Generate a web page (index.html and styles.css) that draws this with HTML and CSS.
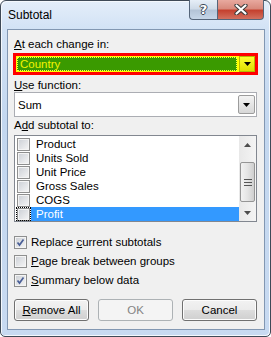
FILE: index.html
```html
<!DOCTYPE html>
<html lang="en">
  <head>
    <meta charset="UTF-8" />
    <title>Subtotal</title>
    <link rel="stylesheet" href="styles.css">
  </head>
  <body>
    <div class="window">
      <div class="titlebar">
        <span class="title">Subtotal</span>
        <div class="caption-buttons">
          <span class="cap-btn cap-help">?</span>
          <span class="cap-btn cap-close">
            <svg width="14" height="11" viewBox="0 0 14 11">
              <path d="M2.5 1.5 L11.5 9.5 M11.5 1.5 L2.5 9.5" stroke="#3a3a3a" stroke-width="4.2" stroke-linecap="round" />
              <path d="M2.5 1.5 L11.5 9.5 M11.5 1.5 L2.5 9.5" stroke="#fff" stroke-width="2.2" stroke-linecap="round" />
            </svg>
          </span>
        </div>
      </div>

      <div class="client">
        <div class="field-label label-first"><u>A</u>t each change in:</div>
        <div class="combo combo-hl">
          <span class="combo-text">Country</span>
          <span class="combo-btn">
            <svg width="7" height="4" viewBox="0 0 7 4"><path d="M0 0 H7 L3.5 4 Z" fill="#000" /></svg>
          </span>
        </div>

        <div class="field-label label-use"><u>U</u>se function:</div>
        <div class="combo combo-plain">
          <span class="combo-text">Sum</span>
          <span class="combo-btn">
            <svg width="7" height="4" viewBox="0 0 7 4"><path d="M0 0 H7 L3.5 4 Z" fill="#000" /></svg>
          </span>
        </div>

        <div class="field-label label-add">A<u>d</u>d subtotal to:</div>
        <div class="listbox">
          <ul class="list-items">
            <li class="list-item"><span class="item-focus"><span class="check"></span></span><span class="item-name">Product</span></li>
            <li class="list-item"><span class="item-focus"><span class="check"></span></span><span class="item-name">Units Sold</span></li>
            <li class="list-item"><span class="item-focus"><span class="check"></span></span><span class="item-name">Unit Price</span></li>
            <li class="list-item"><span class="item-focus"><span class="check"></span></span><span class="item-name">Gross Sales</span></li>
            <li class="list-item"><span class="item-focus"><span class="check"></span></span><span class="item-name">COGS</span></li>
            <li class="list-item is-selected"><span class="item-focus"><span class="check"></span></span><span class="item-name">Profit</span></li>
          </ul>
          <div class="scrollbar">
            <span class="scroll-arrow">
              <svg width="7" height="4" viewBox="0 0 7 4"><path d="M0 4 H7 L3.5 0 Z" fill="#4d4d4d" /></svg>
            </span>
            <div class="scroll-track">
              <span class="scroll-thumb">
                <svg width="8" height="7" viewBox="0 0 8 7"><path d="M0 0.5 H8 M0 3.5 H8 M0 6.5 H8" stroke="#555" stroke-width="1" /></svg>
              </span>
            </div>
            <span class="scroll-arrow">
              <svg width="7" height="4" viewBox="0 0 7 4"><path d="M0 0 H7 L3.5 4 Z" fill="#4d4d4d" /></svg>
            </span>
          </div>
        </div>

        <div class="options">
          <div class="option">
            <span class="check"><svg width="11" height="11" viewBox="0 0 11 11"><path d="M2.5 5.5 L4.5 8 L8.5 2.5" fill="none" stroke="#4a5f97" stroke-width="1.7" /></svg></span>
            <span>Replace <u>c</u>urrent subtotals</span>
          </div>
          <div class="option">
            <span class="check"></span>
            <span><u>P</u>age break between groups</span>
          </div>
          <div class="option">
            <span class="check"><svg width="11" height="11" viewBox="0 0 11 11"><path d="M2.5 5.5 L4.5 8 L8.5 2.5" fill="none" stroke="#4a5f97" stroke-width="1.7" /></svg></span>
            <span><u>S</u>ummary below data</span>
          </div>
        </div>

        <div class="button-row">
          <button type="button" class="btn"><u>R</u>emove All</button>
          <button type="button" class="btn btn-disabled">OK</button>
          <button type="button" class="btn">Cancel</button>
        </div>
      </div>
    </div>
  </body>
</html>
```

FILE: styles.css
```css
  html,
  body {
    margin: 0;
    padding: 0;
  }
  body {
    width: 271px;
    height: 337px;
    overflow: hidden;
    font-family: "Segoe UI", "Liberation Sans", Arial, sans-serif;
    font-size: 11.5px;
    color: #000;
  }
  u {
    text-decoration: underline;
    text-underline-offset: 1px;
  }

  /* window frame */
  .window {
    box-sizing: border-box;
    width: 271px;
    height: 337px;
    border: 1px solid #3f4a57;
    border-radius: 6px 6px 5px 5px;
    background: linear-gradient(to bottom, #e4eefa 0px, #d2e2f5 28px, #c3d7ef 120px, #c8daf1 337px);
    box-shadow: inset 1px 1px 0 #f4f8fd, inset -1px -1px 0 #f4f8fd;
    display: flex;
    flex-direction: column;
  }
  .titlebar {
    height: 28px;
    display: flex;
    align-items: flex-start;
  }
  .title {
    margin: 7px 0 0 7px;
    line-height: 15px;
    font-size: 12px;
  }
  .caption-buttons {
    margin-left: auto;
    margin-right: 6px;
    margin-top: -1px;
    display: flex;
  }
  .cap-btn {
    box-sizing: border-box;
    height: 20px;
    display: flex;
    align-items: center;
    justify-content: center;
    border: 1px solid #55657a;
    border-top: 0;
  }
  .cap-help {
    width: 28px;
    border-radius: 0 0 0 4px;
    border-right: 0;
    background: linear-gradient(to bottom, #e6eef7 0%, #cfdbe8 45%, #b4c4d7 55%, #c6d6e8 100%);
    color: #fff;
    font-family: "DejaVu Sans", sans-serif;
    font-weight: bold;
    font-size: 13px;
    text-shadow: 1px 0 0 #3c4756, -1px 0 0 #3c4756, 0 1px 0 #3c4756, 0 -1px 0 #3c4756;
  }
  .cap-close {
    width: 47px;
    border-radius: 0 0 4px 0;
    background: linear-gradient(to bottom, #e8a99f 0%, #d88a7d 45%, #c5412f 55%, #d2705f 100%);
  }

  /* client area */
  .client {
    box-sizing: border-box;
    height: 301px;
    margin: 0 5px 0 6px;
    border: 1px solid #8297b2;
    background: #f0f0f0;
    padding: 0 7px 0 6px;
    display: flex;
    flex-direction: column;
  }
  .field-label {
    height: 13px;
    line-height: 13px;
  }
  .label-first {
    margin-top: 8px;
  }
  .label-use {
    margin-top: 4px;
  }
  .label-add {
    margin-top: 2px;
  }

  .combo {
    box-sizing: border-box;
    display: flex;
  }
  .combo-btn {
    box-sizing: border-box;
    width: 17px;
    display: flex;
    align-items: center;
    justify-content: center;
  }
  .combo-text {
    flex: 1;
    display: flex;
    align-items: center;
  }
  .combo-hl {
    height: 22px;
    margin: 2px -1px 0 -1px;
    border: 3px solid #ff0000;
    background: #ffff00;
    padding: 1px;
  }
  .combo-hl .combo-text {
    background: #3a9a00;
    color: #f4f400;
    padding-left: 3px;
    outline: 1px dotted #ffff40;
    outline-offset: -1px;
    margin-right: 2px;
  }
  .combo-hl .combo-btn {
    width: 16px;
    margin: -1px -1px -1px 0;
    background: linear-gradient(to bottom, #ffff30, #dede00);
    border: 1px solid #b8b800;
  }
  .combo-plain {
    height: 25px;
    border: 1px solid #abadb3;
    background: #fff;
    padding: 2px 1px 2px 0;
  }
  .combo-plain .combo-text {
    padding-left: 3px;
  }
  .combo-plain .combo-btn {
    background: linear-gradient(to bottom, #f3f3f3, #e5e5e5 50%, #d7d7d7);
    border: 1px solid #9c9c9c;
    border-radius: 2px;
  }

  /* list box */
  .listbox {
    box-sizing: border-box;
    height: 87px;
    margin-top: 3px;
    border: 1px solid #828790;
    background: #fff;
    display: flex;
  }
  .list-items {
    flex: 1;
    margin: 0;
    padding: 1px 0 0 0;
    list-style: none;
  }
  .list-item {
    height: 14px;
    display: flex;
    align-items: center;
  }
  .item-focus {
    box-sizing: border-box;
    width: 15px;
    height: 14px;
    margin-left: 1px;
    display: flex;
    align-items: center;
    padding-left: 1px;
  }
  .item-name {
    flex: 1;
    height: 14px;
    line-height: 14px;
    padding-left: 5px;
  }
  .is-selected .item-focus {
    outline: 1px dotted #000;
    outline-offset: -1px;
  }
  .is-selected .item-name {
    background: #3399ff;
    color: #fff;
  }

  .scrollbar {
    width: 17px;
    display: flex;
    flex-direction: column;
    background: linear-gradient(to right, #e8e8e8, #f4f4f4);
  }
  .scroll-arrow {
    height: 17px;
    display: flex;
    align-items: center;
    justify-content: center;
  }
  .scroll-track {
    flex: 1;
    display: flex;
    flex-direction: column;
    justify-content: flex-end;
    padding-bottom: 2px;
  }
  .scroll-thumb {
    box-sizing: border-box;
    height: 40px;
    margin: 0 1px;
    border: 1px solid #959595;
    border-radius: 2px;
    background: linear-gradient(to right, #f2f2f2, #e4e4e4 50%, #cfcfcf);
    display: flex;
    align-items: center;
    justify-content: center;
  }

  /* checkboxes */
  .check {
    box-sizing: border-box;
    width: 13px;
    height: 13px;
    border: 1px solid #8e8f8f;
    background: linear-gradient(135deg, #cbcfd5, #f6f6f6);
    box-shadow: inset 0 0 0 1px #f4f4f4;
    display: flex;
    align-items: center;
    justify-content: center;
    flex: none;
  }

  .options {
    margin-top: 14px;
    display: flex;
    flex-direction: column;
    gap: 6px;
  }
  .option {
    height: 13px;
    display: flex;
    align-items: center;
    gap: 4px;
    line-height: 13px;
  }

  /* buttons */
  .button-row {
    margin-top: 12px;
    display: flex;
    justify-content: space-between;
  }
  .btn {
    box-sizing: border-box;
    width: 75px;
    height: 22px;
    padding: 0;
    font-family: inherit;
    font-size: 11.5px;
    color: #000;
    border: 1px solid #707070;
    border-radius: 3px;
    background: linear-gradient(to bottom, #f2f2f2 0%, #ebebeb 50%, #dddddd 51%, #cfcfcf 100%);
    box-shadow: inset 0 0 0 1px #fcfcfc;
  }
  .btn-disabled {
    color: #838383;
    border-color: #adb2b5;
    background: #f4f4f4;
    box-shadow: none;
  }
```
